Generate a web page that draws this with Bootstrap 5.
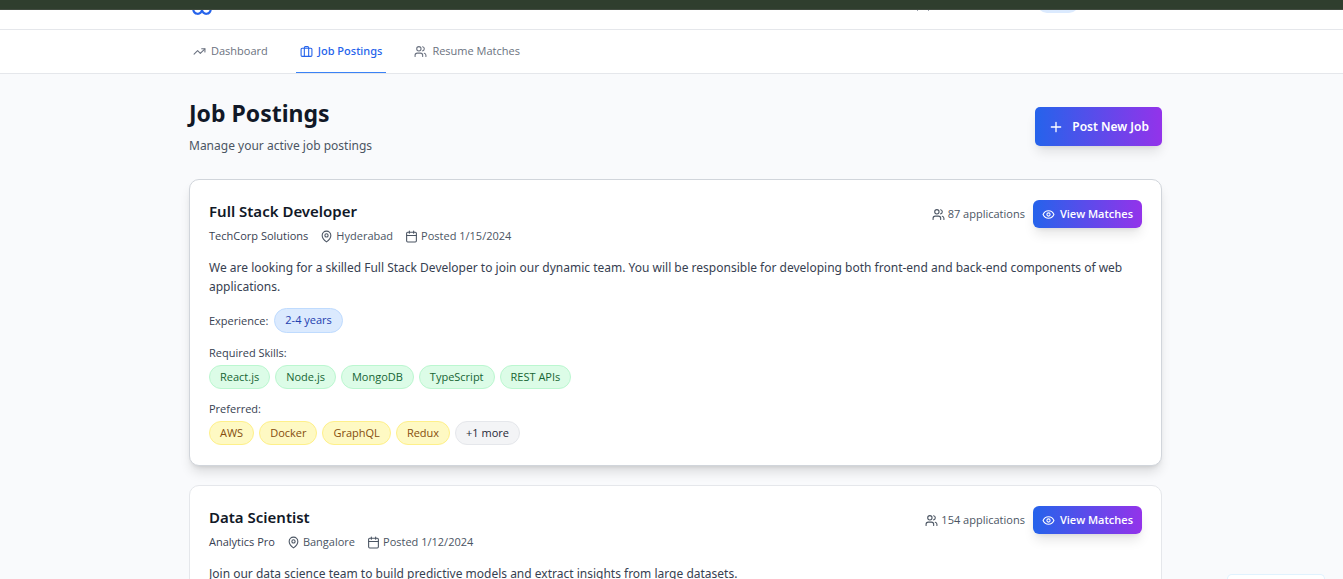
<!DOCTYPE html>
<html lang="en">
<head>
<meta charset="utf-8">
<meta name="viewport" content="width=device-width, initial-scale=1">
<title>Job Postings</title>
<link href="https://cdn.jsdelivr.net/npm/bootstrap@5.3.0/dist/css/bootstrap.min.css" rel="stylesheet">
<style>
  body { font-family: "Open Sans", "Noto Sans", sans-serif; font-size: 11px; line-height: 16px; background: #f9fafc; color: #4b5563; }
  .ico { fill: none; stroke: currentColor; stroke-width: 2; stroke-linecap: round; stroke-linejoin: round; flex: none; width: 13px; height: 13px; }
  .viewport { height: 100vh; }
  .top-strip { height: 10px; background: #2f3e2e; border-bottom: 1px solid #414b40; }
  .page-wrap { max-width: 973px; width: 100%; }
  .shell { padding-left: 8px; }
  .brand-bar { height: 20px; border-bottom: 1px solid #e5e7eb; }
  .brand-bar .page-wrap { height: 19px; }
  .brand-icon { width: 26px; height: 26px; margin-bottom: 13px; color: #2563eb; }
  .header-pill { width: 42px; height: 20px; margin: 0 83px 16px 108px; background: #dbeafe; }
  .header-marks { width: 12px; height: 1px; margin-bottom: 18px; border: solid #9ca3af; border-width: 0 1px; }
  .tabs-bar { border-bottom: 1px solid #e5e7eb; }
  .tab-link { height: 43px; padding: 0 4px; gap: 5px; margin-right: 24px; color: #6b7280; font-weight: 500; text-decoration: none; border-bottom: 1px solid transparent; }
  .tab-link.current { font-family: "Noto Sans", sans-serif; color: #2563eb; border-color: #3b82f6; }
  .page-head { padding: 24px 0; }
  .page-title { font: 700 23px/30px "Noto Sans", sans-serif; color: #111827; margin-bottom: 8px; }
  .body-text { font: 400 12px/19px "Noto Sans", sans-serif; }
  .grad-btn { color: #fff; border: 0; border-radius: 6px; background: linear-gradient(90deg, #2563eb, #9333ea); box-shadow: 0 8px 12px -2px rgba(0,0,0,.1), 0 3px 5px -3px rgba(0,0,0,.1); font-weight: 600; }
  .post-btn { font: 600 12px/19px "Noto Sans", sans-serif; height: 39px; padding: 0 13px; gap: 8px; border-radius: 5px; }
  .post-btn .ico { width: 16px; height: 16px; }
  .match-btn { height: 28px; padding: 0 9px; gap: 5px; }
  .job-card { background: #fff; border: 1px solid #e5e7eb; border-radius: 10px; padding: 20px 19px; margin-bottom: 19px; }
  .job-card.raised { border-color: #d1d5db; box-shadow: 0 8px 12px -2px rgba(0,0,0,.12), 0 3px 5px -3px rgba(0,0,0,.14); }
  .job-title { font: 600 15px/22px "Noto Sans", sans-serif; color: #111827; margin-bottom: 6px; }
  .meta-row { gap: 12px; }
  .icon-text { gap: 3px; }
  .summary { color: #374151; margin: 14px 0 12px; }
  .company, .field-label { font-weight: 500; color: #374151; }
  .pill { display: inline-block; padding: 3px 10px; border: 1px solid; border-radius: 13px; font-weight: 500; line-height: 16px; }
  .pill-blue { background: #dbeafe; border-color: #bfdbfe; color: #1e40af; padding-bottom: 4px; }
  .pill-green { background: #dcfce7; border-color: #bbf7d0; color: #166534; }
  .pill-yellow { background: #fef9c3; border-color: #fef08a; color: #854d0e; }
  .pill-gray { background: #f3f4f6; border-color: #e5e7eb; color: #1f2937; }
  .pill-row { gap: 6px; }
  .pill-row:not(:last-child) { margin-bottom: 12px; }
  .skill-row { gap: 5px; }
  .corner-panel { right: 18px; bottom: 0; width: 98px; height: 5px; background: #fff; border: 1px solid #e0f2fe; border-bottom: 0; border-radius: 5px 5px 0 0; }
</style>
</head>
<body>
<svg class="d-none" aria-hidden="true">
  <symbol id="i-users" viewBox="0 0 24 24"><path d="M16 21v-2a4 4 0 0 0-4-4H6a4 4 0 0 0-4 4v2"/><circle cx="9" cy="7" r="4"/><path d="M22 21v-2a4 4 0 0 0-3-3.870M16 3.130a4 4 0 0 1 0 7.750"/></symbol>
  <symbol id="i-pin" viewBox="0 0 24 24"><path d="M20 10c0 6-8 12-8 12s-8-6-8-12a8 8 0 0 1 16 0Z"/><circle cx="12" cy="10" r="3"/></symbol>
  <symbol id="i-cal" viewBox="0 0 24 24"><rect x="3" y="4" width="18" height="18" rx="2"/><path d="M16 2v4M8 2v4M3 10h18"/></symbol>
  <symbol id="i-eye" viewBox="0 0 24 24"><path d="M2 12s3-7 10-7 10 7 10 7-3 7-10 7-10-7-10-7Z"/><circle cx="12" cy="12" r="3"/></symbol>
</svg>
<div class="viewport overflow-hidden">
  <div class="top-strip"></div>
  <header class="brand-bar bg-white shell overflow-hidden">
    <div class="page-wrap mx-auto d-flex align-items-end">
      <svg class="ico brand-icon me-auto" viewBox="0 0 24 24"><path d="M9.500 2A2.500 2.500 0 0 1 12 4.500V18a4 4 0 1 1-7.970-.520 4 4 0 0 1-.550-6.590 4 4 0 0 1 2.520-5.770A3 3 0 0 1 9.500 2Z"/><path d="M14.500 2A2.500 2.500 0 0 0 12 4.500V18a4 4 0 1 0 7.970-.520 4 4 0 0 0 .550-6.590 4 4 0 0 0-2.520-5.770A3 3 0 0 0 14.500 2Z"/></svg>
      <span class="header-marks"></span>
      <span class="header-pill rounded-pill"></span>
    </div>
  </header>
  <nav class="tabs-bar bg-white shell">
    <div class="page-wrap mx-auto d-flex">
      <a href="#" class="tab-link d-flex align-items-center"><svg class="ico" viewBox="0 0 24 24"><path d="m22 7-8.500 8.500-5-5L2 17"/><path d="M16 7h6v6"/></svg>Dashboard</a>
      <a href="#" class="tab-link current d-flex align-items-center" aria-current="page"><svg class="ico" viewBox="0 0 24 24"><rect x="2" y="6" width="20" height="15" rx="2"/><path d="M16 21V5a2 2 0 0 0-2-2h-4a2 2 0 0 0-2 2v16"/></svg>Job Postings</a>
      <a href="#" class="tab-link d-flex align-items-center"><svg class="ico"><use href="#i-users"/></svg>Resume Matches</a>
    </div>
  </nav>
  <main class="shell">
    <div class="page-wrap mx-auto">
      <div class="page-head d-flex justify-content-between align-items-center">
        <div>
          <h1 class="page-title">Job Postings</h1>
          <p class="body-text mb-0">Manage your active job postings</p>
        </div>
        <button type="button" class="grad-btn post-btn d-flex align-items-center"><svg class="ico" viewBox="0 0 24 24"><path d="M5 12h14M12 5v14"/></svg>Post New Job</button>
      </div>

      <article class="job-card raised">
        <div class="d-flex justify-content-between align-items-start">
          <div>
            <h2 class="job-title">Full Stack Developer</h2>
            <div class="meta-row d-flex align-items-center">
              <span class="company">TechCorp Solutions</span>
              <span class="icon-text d-flex align-items-center"><svg class="ico"><use href="#i-pin"/></svg>Hyderabad</span>
              <span class="icon-text d-flex align-items-center"><svg class="ico"><use href="#i-cal"/></svg>Posted 1/15/2024</span>
            </div>
          </div>
          <div class="d-flex align-items-center gap-2">
            <span class="icon-text d-flex align-items-center"><svg class="ico"><use href="#i-users"/></svg>87 applications</span>
            <button type="button" class="grad-btn match-btn d-flex align-items-center"><svg class="ico"><use href="#i-eye"/></svg>View Matches</button>
          </div>
        </div>
        <p class="body-text summary">We are looking for a skilled Full Stack Developer to join our dynamic team. You will be responsible for developing both front-end and back-end components of web applications.</p>
        <div class="d-flex align-items-center pill-row"><span class="field-label">Experience:</span><span class="pill pill-blue">2-4 years</span></div>
        <div class="field-label mb-1">Required Skills:</div>
        <div class="d-flex flex-wrap pill-row skill-row"><span class="pill pill-green">React.js</span><span class="pill pill-green">Node.js</span><span class="pill pill-green">MongoDB</span><span class="pill pill-green">TypeScript</span><span class="pill pill-green">REST APIs</span></div>
        <div class="field-label mb-1">Preferred:</div>
        <div class="d-flex flex-wrap pill-row skill-row"><span class="pill pill-yellow">AWS</span><span class="pill pill-yellow">Docker</span><span class="pill pill-yellow">GraphQL</span><span class="pill pill-yellow">Redux</span><span class="pill pill-gray">+1 more</span></div>
      </article>

      <article class="job-card">
        <div class="d-flex justify-content-between align-items-start">
          <div>
            <h2 class="job-title">Data Scientist</h2>
            <div class="meta-row d-flex align-items-center">
              <span class="company">Analytics Pro</span>
              <span class="icon-text d-flex align-items-center"><svg class="ico"><use href="#i-pin"/></svg>Bangalore</span>
              <span class="icon-text d-flex align-items-center"><svg class="ico"><use href="#i-cal"/></svg>Posted 1/12/2024</span>
            </div>
          </div>
          <div class="d-flex align-items-center gap-2">
            <span class="icon-text d-flex align-items-center"><svg class="ico"><use href="#i-users"/></svg>154 applications</span>
            <button type="button" class="grad-btn match-btn d-flex align-items-center"><svg class="ico"><use href="#i-eye"/></svg>View Matches</button>
          </div>
        </div>
        <p class="body-text summary">Join our data science team to build predictive models and extract insights from large datasets.</p>
      </article>
    </div>
  </main>
  <div class="corner-panel position-fixed"></div>
</div>
<script src="https://cdn.jsdelivr.net/npm/bootstrap@5.3.0/dist/js/bootstrap.bundle.min.js"></script>
</body>
</html>
